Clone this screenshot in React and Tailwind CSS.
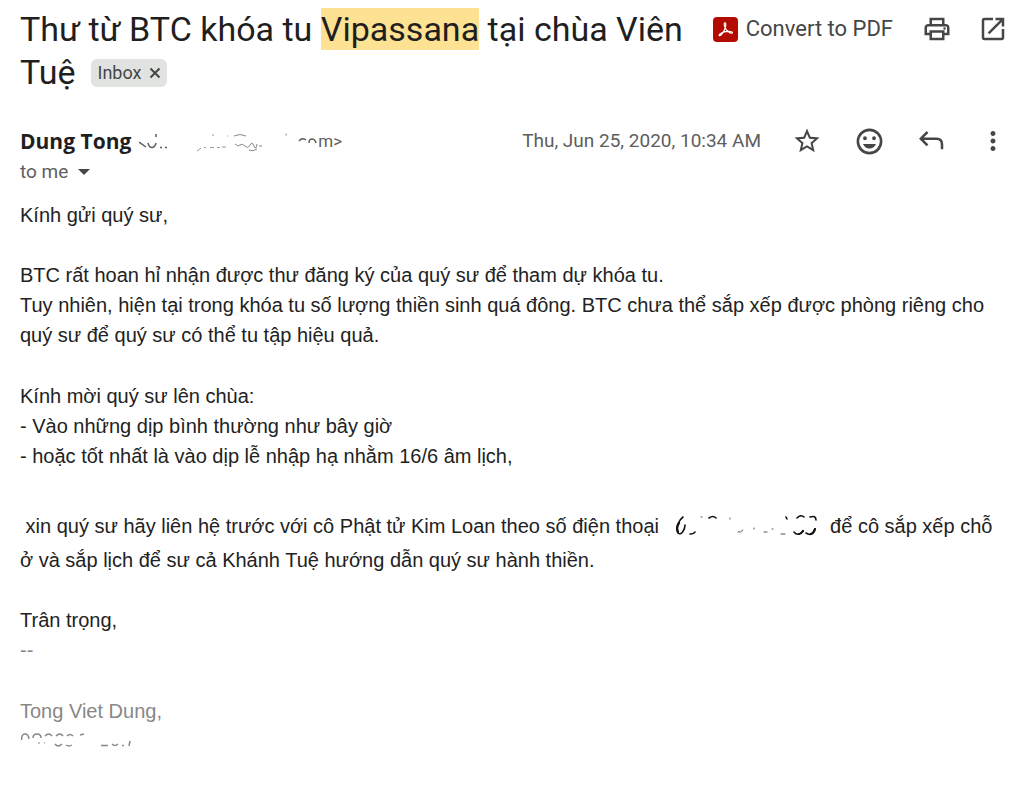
const iconButton = "flex h-8 w-8 items-center justify-center text-[#444746]";

function Icon({ d, className }) {
  return (
    <svg viewBox="0 0 24 24" className={className} fill="currentColor" aria-hidden="true">
      <path d={d} />
    </svg>
  );
}

function AcrobatIcon() {
  return (
    <svg viewBox="0 0 25 25" className="h-[25px] w-[25px] shrink-0" aria-hidden="true">
      <rect width="25" height="25" rx="4" fill="#b30b00" />
      <path
        d="M12 5.800c1.300 0 .8 3.500-.2 6.200-1.200 3.200-3.800 7-5.300 6.700-1.700-.6 2-3.400 6-4 3.500-.6 7.300-.3 7 1-.4 1.500-3.700-.2-5.800-2.500-2.200-2.600-3.300-7.400-1.700-7.400z"
        fill="none"
        stroke="#fff"
        strokeWidth="1.200"
        strokeLinejoin="round"
      />
    </svg>
  );
}

function MaskedAddress() {
  return (
    <svg viewBox="0 0 179 24" className="h-6 w-[179px] shrink-0" fill="none" stroke="#5e5e5e" strokeWidth="1.500" aria-hidden="true">
      <path d="M0 13l7 5M9 14q1 4.500 4 4.500t4-4.500M17 5v3M21 18.500h2M26 18.500h2" />
      <path d="M58 22l4-3M65 18.500h2M71 18.500h4M78 18.500h3M83 18h4M73 6h2M88 7h1" stroke="#999" strokeWidth="1" />
      <path d="M95 7q6-3 12 0M96 15q3 3 5 1t5 1 5-1 4 1 3-2M110 21q4 2 8-1M120 17h3M147 4.500v2" stroke="#888" strokeWidth="1" />
      <path d="M160 12q3-4 7-1M170 14q0-4 3-4t4 4" />
    </svg>
  );
}

function MaskedPhone() {
  return (
    <svg viewBox="0 0 146 24" className="inline-block h-6 w-[146px] align-[-5px]" fill="none" stroke="#111" strokeWidth="1.600" strokeLinecap="round" aria-hidden="true">
      <path d="M8 3C4 6 0 14 3 19C6 22 10 16 10 11M15 20q4 0 5-2M34 4q4-3 7 0M122 4q4-4 7-1M135 3q6-2 6 3M119 18q4 5 9-1M131 19q6 4 9-4M111 3l1 2" />
      <path d="M3 18q-2-5 1-9M128 17q-2 3-4 3M140 15q-1 4-4 5" strokeWidth="2.200" />
      <path d="M26 3h1M55 4v1M63 18q3 1 5-2M79 14v1M89 18h3M97 15h1M106 20h4" strokeWidth="1" stroke="#555" />
    </svg>
  );
}

function MaskedSignature() {
  return (
    <svg viewBox="0 0 116 20" className="block h-5 w-[116px]" fill="none" stroke="#888" strokeWidth="1.500" aria-hidden="true">
      <path d="M1.500 10Q1.500 4 5 4t4 5M13 8q0-4 4-4t4 4M25 6q4-4 7 0M36 6q4-4 7 0M47 6q3-3 6 0M60 5l4-1M35 14q3 4 7 0M46 15q3 2 6 0M81 15.500h7M92 14q3 3 6 0M102 15.500h2M110 11l-1 5" />
      <path d="M18 13h2M24 13h1" strokeWidth="1" />
    </svg>
  );
}

export default function App() {
  return (
    <main className="min-h-screen bg-white pr-[15px] pl-5 pt-2 font-['Liberation_Sans',sans-serif] text-[#222]">
      <header className="flex items-start justify-between">
        <h1 className="max-w-[672px] flex-1 font-[Roboto,sans-serif] text-[34px] leading-[43px] text-[#1f1f1f]">
          Thư từ BTC khóa tu <mark className="bg-[#fde293] py-px text-inherit">Vipassana</mark> tại chùa Viên Tuệ
          <span className="ml-4 inline-flex h-7 items-center gap-2 rounded-md bg-[#e1e3e1] px-[6px] align-[5px] text-[18px] leading-7 text-[#444746]">
            Inbox
            <button aria-label="Remove label Inbox">
              <svg viewBox="0 0 12 12" className="h-3 w-3" stroke="currentColor" strokeWidth="2" aria-hidden="true">
                <path d="M1.500 1.500l9 9M10.500 1.500l-9 9" />
              </svg>
            </button>
          </span>
        </h1>
        <div className="flex shrink-0 items-center gap-6 pt-[5px]">
          <button className="mr-1 flex items-center gap-2 whitespace-nowrap font-[Roboto,sans-serif] text-[22px] leading-8 text-[#444746]">
            <AcrobatIcon />
            Convert to PDF
          </button>
          <button aria-label="Print all" className={iconButton}>
            <Icon className="h-[30px] w-[30px]" d="M19 8h-1V3H6v5H5c-1.660 0-3 1.340-3 3v6h4v4h12v-4h4v-6c0-1.660-1.340-3-3-3zM8 5h8v3H8V5zm8 14H8v-4h8v4zm2-4v-2H6v2H4v-4c0-.55.45-1 1-1h14c.55 0 1 .45 1 1v4h-2zM17 11.500a1 1 0 1 0 2 0a1 1 0 1 0-2 0z" />
          </button>
          <button aria-label="In new window" className={iconButton}>
            <Icon className="h-[30px] w-[30px]" d="M19 19H5V5h7V3H5c-1.110 0-2 .9-2 2v14c0 1.100.89 2 2 2h14c1.100 0 2-.9 2-2v-7h-2v7zM14 3v2h3.590l-9.830 9.830 1.410 1.410L19 6.410V10h2V3h-7z" />
          </button>
        </div>
      </header>

      <section className="mt-[31px] flex items-center justify-between font-[Roboto,sans-serif]">
        <div className="flex items-center">
          <h2 className="mr-2 font-['Open_Sans',sans-serif] text-[21px] leading-8 font-bold text-[#1f1f1f]">Dung Tong</h2>
          <MaskedAddress />
          <span className="text-[17px] leading-6 text-[#5e5e5e]">m&gt;</span>
        </div>
        <div className="flex items-center gap-[30px]">
          <time dateTime="2020-06-25T10:34" className="text-[19px] leading-8 text-[#5e5e5e]">Thu, Jun 25, 2020, 10:34 AM</time>
          <button aria-label="Star" className={iconButton}>
            <Icon className="h-[30px] w-[30px]" d="M22 9.240l-7.190-.62L12 2 9.190 8.630 2 9.240l5.460 4.730L5.820 21 12 17.270 18.180 21l-1.630-7.030L22 9.240zM12 15.400l-3.760 2.270 1-4.280-3.320-2.880 4.380-.38L12 6.100l1.710 4.040 4.380.38-3.320 2.880 1 4.280L12 15.400z" />
          </button>
          <button aria-label="Add reaction" className={iconButton}>
            <Icon className="h-[31px] w-[31px]" d="M12 2a10 10 0 1 0 0 20a10 10 0 0 0 0-20zm0 18a8 8 0 1 1 0-16a8 8 0 0 1 0 16zM8.500 11a1.500 1.500 0 1 0 0-3a1.500 1.500 0 0 0 0 3zm7 0a1.500 1.500 0 1 0 0-3a1.500 1.500 0 0 0 0 3zM7 14c.7 2 2.600 3.500 5 3.500s4.300-1.500 5-3.500H7z" />
          </button>
          <button aria-label="Reply" className={iconButton}>
            <svg viewBox="0 0 30 30" className="h-[30px] w-[30px]" fill="none" stroke="currentColor" strokeWidth="2.500" aria-hidden="true">
              <path d="M11.500 6L4.800 12.700l6.700 6.700M5 12.700h15.500q5.500 0 5.500 5.500v5" />
            </svg>
          </button>
          <button aria-label="More" className={iconButton}>
            <Icon className="h-[30px] w-[30px]" d="M12 8c1.100 0 2-.9 2-2s-.9-2-2-2-2 .9-2 2 .9 2 2 2zm0 2c-1.100 0-2 .9-2 2s.9 2 2 2 2-.9 2-2-.9-2-2-2zm0 6c-1.100 0-2 .9-2 2s.9 2 2 2 2-.9 2-2-.9-2-2-2z" />
          </button>
        </div>
      </section>
      <button aria-label="Show details" className="flex items-center gap-[10px] font-[Roboto,sans-serif] text-[19px] leading-[30px] text-[#5e5e5e]">
        to me
        <svg viewBox="0 0 12 6" className="h-[6px] w-3" fill="#444746" aria-hidden="true"><path d="M0 0h12L6 6z" /></svg>
      </button>

      <article className="mt-[13px] pr-2 text-[20px] leading-[30px]">
        <p>Kính gửi quý sư,</p>
        <p className="mt-[30px]">BTC rất hoan hỉ nhận được thư đăng ký của quý sư để tham dự khóa tu.</p>
        <p>Tuy nhiên, hiện tại trong khóa tu số lượng thiền sinh quá đông. BTC chưa thể sắp xếp được phòng riêng cho quý sư để quý sư có thể tu tập hiệu quả.</p>
        <p className="mt-[31px]">Kính mời quý sư lên chùa:</p>
        <p>- Vào những dịp bình thường như bây giờ</p>
        <p>- hoặc tốt nhất là vào dịp lễ nhập hạ nhằm 16/6 âm lịch,</p>
        <p className="mt-[38px] leading-[34px]">
          &nbsp;xin quý sư hãy liên hệ trước với cô Phật tử Kim Loan theo số điện thoại <span className="mr-1 ml-[10px]"><MaskedPhone /></span> để cô sắp xếp chỗ ở và sắp lịch để sư cả Khánh Tuệ hướng dẫn quý sư hành thiền.
        </p>
        <p className="mt-7">Trân trọng,</p>
        <footer className="text-[#888]">
          <p>--</p>
          <p className="mt-[31px] mb-1">Tong Viet Dung,</p>
          <MaskedSignature />
        </footer>
      </article>
    </main>
  );
}
